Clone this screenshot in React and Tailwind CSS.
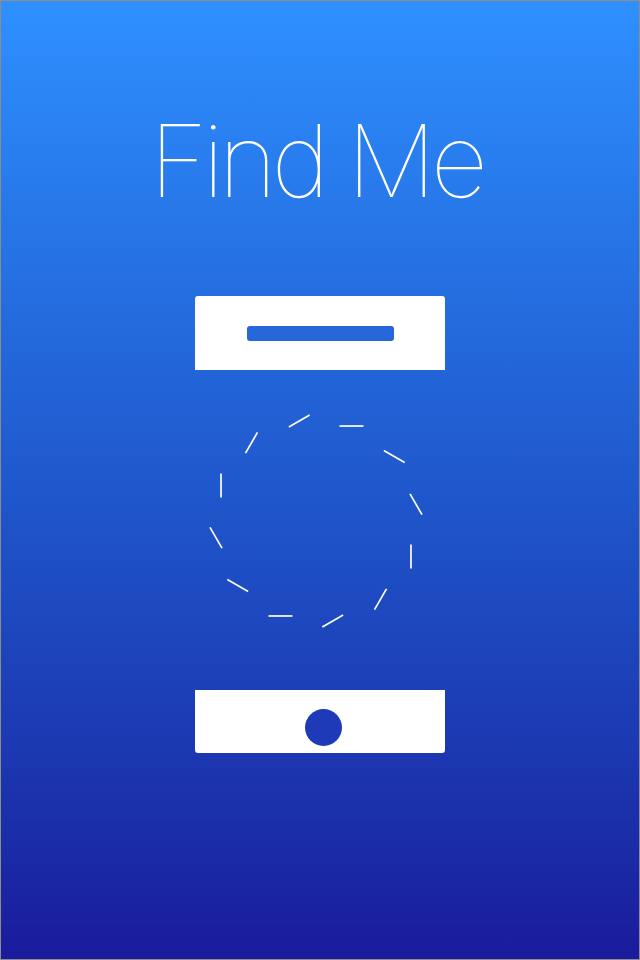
const CX = 116;
const CY = 120;
const RADIUS = 101.4;
const HALF = 12;

// 12 slanted dashes around a ring, each turned 30deg from the last
const dashes = Array.from({ length: 12 }, (_, i) => {
  const pos = ((-69.5 + 30 * i) * Math.PI) / 180;
  const dir = ((30 * i) * Math.PI) / 180;
  const mx = CX + RADIUS * Math.cos(pos);
  const my = CY + RADIUS * Math.sin(pos);
  return {
    x1: mx - HALF * Math.cos(dir),
    y1: my - HALF * Math.sin(dir),
    x2: mx + HALF * Math.cos(dir),
    y2: my + HALF * Math.sin(dir),
  };
});

function Spinner() {
  return (
    <svg width="240" height="240" viewBox="0 0 240 240" className="mt-[31px]">
      {dashes.map((d, i) => (
        <line key={i} x1={d.x1} y1={d.y1} x2={d.x2} y2={d.y2} stroke="#ffffff" strokeWidth="1.7" />
      ))}
    </svg>
  );
}

export default function App() {
  return (
    <div className="w-[640px] h-[960px] box-border border border-[#8c8c8c] bg-gradient-to-b from-[#2f90ff] to-[#1a1a9c] flex flex-col items-center font-['Inter','Roboto','Liberation_Sans',sans-serif]">
      {/* title */}
      <h1 className="pt-[110px] pr-[8px] text-[100px] leading-none font-thin text-white tracking-[-5.5px]">Find Me</h1>

      {/* search field card */}
      <div className="mt-[85px] w-[250px] h-[74px] bg-white rounded-t-[3px] flex items-center justify-center">
        <div className="w-[147px] h-[15px] rounded-[3px] bg-[#2566da]"></div>
      </div>

      <Spinner />

      {/* button card */}
      <div className="mt-[49px] w-[250px] h-[63px] bg-white rounded-b-[3px] pl-[110px] pt-[19px]">
        <div className="w-[37px] h-[37px] rounded-full bg-[#1f3ab8]"></div>
      </div>
    </div>
  );
}
